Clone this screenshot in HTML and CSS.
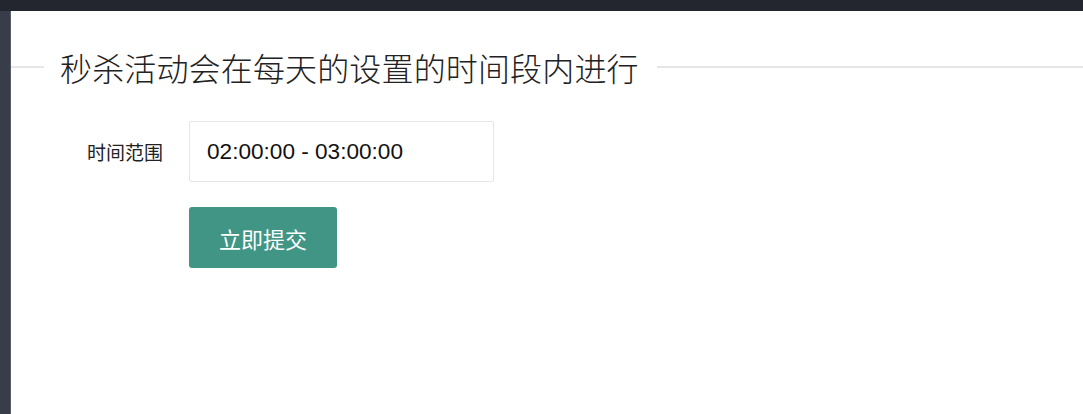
FILE: index.html
```html
<!DOCTYPE html>
<html lang="zh-CN">
<head>
<meta charset="utf-8">
<title>秒杀活动</title>
<link rel="stylesheet" href="styles.css">
</head>
<body>
<div class="topbar"></div>
<div class="layout">
  <aside class="side"></aside>
  <main class="main">
    <div class="field-title"><span class="legend">秒杀活动会在每天的设置的时间段内进行</span></div>
    <form class="form">
      <div class="form-item">
        <label class="form-label">时间范围</label>
        <input class="form-input" type="text" value="02:00:00 - 03:00:00">
      </div>
      <div class="form-item form-actions">
        <button class="btn" type="button">立即提交</button>
      </div>
    </form>
  </main>
</div>
</body>
</html>
```
FILE: styles.css
```css
html, body {
  margin: 0;
  padding: 0;
  height: 100%;
  background: #ffffff;
  font-family: "Noto Sans CJK SC", "Liberation Sans", sans-serif;
}
.topbar {
  height: 11px;
  background: #23262e;
}
.layout {
  display: flex;
  height: calc(100% - 11px);
}
.side {
  width: 10px;
  flex: none;
  background: #393d49;
  border-right: 1px solid #5a5e68;
}
.main {
  flex: 1;
  background: #ffffff;
}
.field-title {
  display: flex;
  align-items: center;
  height: 40px;
  margin-top: 36px;
}
.field-title::before {
  content: "";
  width: 33px;
  height: 2px;
  background: #e6e6e6;
  flex: none;
}
.field-title::after {
  content: "";
  flex: 1;
  height: 2px;
  background: #e6e6e6;
}
.legend {
  padding: 0 18px 0 16px;
  font-size: 32px;
  font-weight: 300;
  letter-spacing: 0.15px;
  line-height: 40px;
  color: #222;
  white-space: nowrap;
}
.form {
  margin-top: 34px;
}
.form-item {
  display: flex;
  align-items: center;
}
.form-label {
  width: 152px;
  text-align: right;
  margin-right: 26px;
  font-size: 19px;
  color: #222;
}
.form-input {
  box-sizing: border-box;
  width: 305px;
  height: 61px;
  border: 1px solid #e6e6e6;
  border-radius: 2px;
  padding: 0 17px;
  font-family: "Liberation Sans", Arial, sans-serif;
  font-size: 22.6px;
  color: #111;
  outline: none;
  margin: 0;
}
.form-actions {
  margin-top: 25px;
  padding-left: 178px;
}
.btn {
  width: 148px;
  height: 61px;
  border: none;
  border-radius: 3px;
  background: #419585;
  color: #ffffff;
  font-family: "Noto Sans CJK SC", "Liberation Sans", sans-serif;
  font-size: 22px;
  padding: 0;
  margin: 0;
  cursor: pointer;
}
```
